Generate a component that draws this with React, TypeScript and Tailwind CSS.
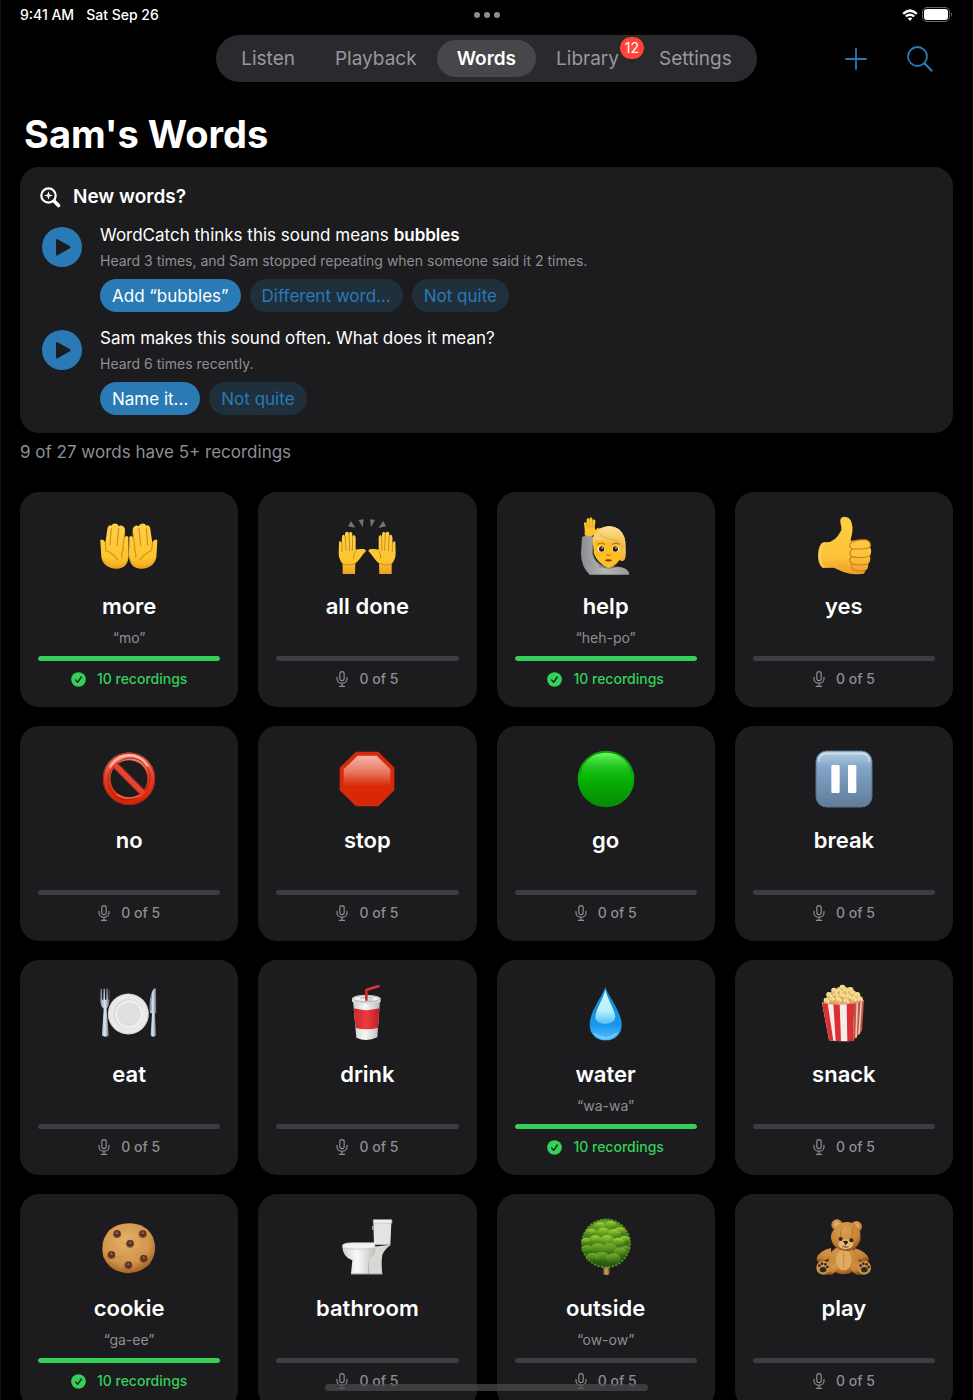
import type { ReactNode } from "react";
import clsx from "clsx";

type Word = {
  label: string;
  sound?: string;
  recordings: number;
  art: ReactNode;
};

type Suggestion = {
  title: ReactNode;
  detail: string;
  primary: string;
  secondary: string[];
};

const GOAL = 5;

const TABS: { label: string; badge?: number }[] = [
  { label: "Listen" },
  { label: "Playback" },
  { label: "Words" },
  { label: "Library", badge: 12 },
  { label: "Settings" },
];

const SUGGESTIONS: Suggestion[] = [
  {
    title: (
      <>
        WordCatch thinks this sound means <strong className="font-semibold">bubbles</strong>
      </>
    ),
    detail: "Heard 3 times, and Sam stopped repeating when someone said it 2 times.",
    primary: "Add “bubbles”",
    secondary: ["Different word...", "Not quite"],
  },
  {
    title: "Sam makes this sound often. What does it mean?",
    detail: "Heard 6 times recently.",
    primary: "Name it...",
    secondary: ["Not quite"],
  },
];

const WORDS: Word[] = [
  { label: "more", sound: "mo", recordings: 10, art: <PalmsUp /> },
  { label: "all done", recordings: 0, art: <RaisedHands /> },
  { label: "help", sound: "heh-po", recordings: 10, art: <HandRaiser /> },
  { label: "yes", recordings: 0, art: <ThumbsUp /> },
  { label: "no", recordings: 0, art: <Prohibited /> },
  { label: "stop", recordings: 0, art: <StopSign /> },
  { label: "go", recordings: 0, art: <GreenCircle /> },
  { label: "break", recordings: 0, art: <PauseButton /> },
  { label: "eat", recordings: 0, art: <Plate /> },
  { label: "drink", recordings: 0, art: <Cup /> },
  { label: "water", sound: "wa-wa", recordings: 10, art: <Droplet /> },
  { label: "snack", recordings: 0, art: <Popcorn /> },
  { label: "cookie", sound: "ga-ee", recordings: 10, art: <Cookie /> },
  { label: "bathroom", recordings: 0, art: <Toilet /> },
  { label: "outside", sound: "ow-ow", recordings: 0, art: <Tree /> },
  { label: "play", recordings: 0, art: <Teddy /> },
];

export default function App() {
  return (
    <div className="relative flex h-screen flex-col overflow-hidden border-x border-[#111111] bg-black font-['Inter','Liberation_Sans',sans-serif] text-white">
      <StatusBar />
      <TopNav />
      <main className="min-h-0 flex-1 overflow-hidden px-[19px] pt-7">
        <h1 className="px-1 text-[38px] font-bold leading-12">Sam's Words</h1>
        <SuggestionPanel />
        <p className="mt-[7px] text-[17px] leading-6 text-[#8e8e93]">9 of 27 words have 5+ recordings</p>
        <div className="mt-7 grid grid-cols-4 gap-x-5 gap-y-[19px]">
          {WORDS.map((word) => (
            <WordCard key={word.label} word={word} />
          ))}
        </div>
      </main>
      <div className="absolute inset-x-0 bottom-[9px] mx-auto h-[7px] w-1/3 rounded-full bg-[#4c4c4e]/70" />
    </div>
  );
}

function StatusBar() {
  return (
    <header className="grid h-[35px] grid-cols-3 px-[19px] pb-1.5 text-sm font-medium leading-none">
      <div className="flex items-center gap-3">
        <span>9:41 AM</span>
        <span>Sat Sep 26</span>
      </div>
      <div className="flex items-center justify-center gap-1">
        <span className="size-1.5 rounded-full bg-[#8e8e8e]" />
        <span className="size-1.5 rounded-full bg-[#8e8e8e]" />
        <span className="size-1.5 rounded-full bg-[#8e8e8e]" />
      </div>
      <div className="flex items-center justify-end gap-1">
        <svg viewBox="0 0 48 36" className="h-3 w-4" aria-label="Wi-Fi">
          <path d="M1 12Q24 -10 47 12L42 17Q24 1 6 17ZM9 20Q24 7 39 20L34 25Q24 17 14 25ZM17 28Q24 23 31 28L24 36Z" fill="#fff" />
        </svg>
        <svg viewBox="0 0 31 15" className="h-[15px] w-[31px]" aria-label="Battery full">
          <rect x="0.5" y="0.5" width="27" height="14" rx="4.5" fill="none" stroke="#6b6b6b" />
          <rect x="2" y="2" width="24" height="11" rx="3" fill="#fff" />
          <path d="M29 5 Q31 7.500 29 10Z" fill="#6b6b6b" />
        </svg>
      </div>
    </header>
  );
}

function TopNav() {
  return (
    <div className="grid grid-cols-[1fr_auto_1fr] items-center px-[39px]">
      <nav className="col-start-2 flex rounded-full bg-[#2a292d] p-[5px]">
        {TABS.map((tab) => (
          <button
            key={tab.label}
            type="button"
            className={clsx(
              "relative h-[37px] rounded-full px-5 text-[19px] leading-6",
              tab.label === "Words" ? "bg-[#47464b] font-semibold text-white" : "text-[#98989d]",
            )}
          >
            {tab.label}
            {tab.badge ? (
              <span className="absolute -top-[3px] right-[-5px] rounded-full bg-[#ff443a] px-[5px] text-sm leading-[22px] text-white">
                {tab.badge}
              </span>
            ) : null}
          </button>
        ))}
      </nav>
      <div className="flex items-center justify-end gap-10">
        <button type="button" aria-label="Add word">
          <svg viewBox="0 0 22 22" className="size-[22px]" fill="none" stroke="#2a7ab5" strokeWidth="1.8" strokeLinecap="round">
            <path d="M11 1V21M1 11H21" />
          </svg>
        </button>
        <button type="button" aria-label="Search">
          <svg viewBox="0 0 26 26" className="size-[26px]" fill="none" stroke="#2a7ab5" strokeLinecap="round">
            <circle cx="10.500" cy="10.500" r="9.500" strokeWidth="1.800" />
            <path d="M17.500 17.500L24.500 24.500" strokeWidth="2.400" />
          </svg>
        </button>
      </div>
    </div>
  );
}

function SuggestionPanel() {
  return (
    <section className="mt-[9px] rounded-[19px] bg-[#1c1c1e] px-5 py-[18px]">
      <div className="flex items-center gap-3">
        <svg viewBox="0 0 21 21" className="size-[21px]" fill="none" stroke="#fff" strokeLinecap="round">
          <circle cx="8.500" cy="8.500" r="7.200" strokeWidth="2.200" />
          <path d="M14.500 14.500L18.500 18.500" strokeWidth="3.600" />
          <path d="M8.500 4.200L9.600 7.400L12.800 8.500L9.600 9.600L8.500 12.800L7.400 9.600L4.200 8.500L7.400 7.400Z" fill="#fff" stroke="none" />
        </svg>
        <h2 className="text-[19px] font-semibold leading-6">New words?</h2>
      </div>
      <div className="mt-[13px] flex flex-col gap-[13px]">
        {SUGGESTIONS.map((item) => (
          <SuggestionRow key={item.detail} item={item} />
        ))}
      </div>
    </section>
  );
}

function SuggestionRow({ item }: { item: Suggestion }) {
  return (
    <div className="flex items-start gap-[18px] pl-0.5">
      <button type="button" aria-label="Play sound" className="mt-[5px] size-10 shrink-0 rounded-full bg-[#2a7ab5]">
        <svg viewBox="0 0 40 40" className="size-10">
          <path d="M14 13V27.500Q14 29 15.500 28.200L28 21.200Q29 20.300 28 19.300L15.500 12.200Q14 11.500 14 13Z" fill="#1c1c1e" />
        </svg>
      </button>
      <div>
        <p className="text-[17px] leading-[26px]">{item.title}</p>
        <p className="mt-[3px] text-sm leading-5 text-[#8e8e93]">{item.detail}</p>
        <div className="mt-2 flex gap-[9px]">
          <button type="button" className="h-[33px] rounded-full bg-[#2a7ab5] px-3 text-[17px] leading-6">
            {item.primary}
          </button>
          {item.secondary.map((label) => (
            <button key={label} type="button" className="h-[33px] rounded-full bg-[#1f2f3c] px-3 text-[17px] leading-6 text-[#2a7ab5]">
              {label}
            </button>
          ))}
        </div>
      </div>
    </div>
  );
}

function WordCard({ word }: { word: Word }) {
  const complete = word.recordings >= GOAL;
  const percent = Math.min(100, (word.recordings / GOAL) * 100);

  return (
    <button type="button" className="flex flex-col items-center rounded-[19px] bg-[#1c1c1e] px-[18px] pb-[19px] pt-[23px]">
      {word.art}
      <span className="mt-[15px] text-[22px] font-semibold leading-8">{word.label}</span>
      <span className="mt-[7px] h-[18px] text-sm leading-[18px] text-[#8e8e93]">
        {word.sound ? `“${word.sound}”` : null}
      </span>
      <span className="mt-[9px] h-[5px] w-full overflow-hidden rounded-full bg-[#3d3c41]">
        <span className="block h-full rounded-full bg-[#34d05a]" style={{ width: `${percent}%` }} />
      </span>
      {complete ? (
        <span className="mt-[9px] flex items-center gap-[11px] text-sm font-medium leading-[18px] text-[#34d05a]">
          <svg viewBox="0 0 45 45" className="size-[15px]">
            <circle cx="22.500" cy="22.500" r="22" fill="#34d05a" />
            <path d="M14 24L20 31L31 15" fill="none" stroke="#1c1c1e" strokeWidth="4" strokeLinecap="round" strokeLinejoin="round" />
          </svg>
          {word.recordings} recordings
        </span>
      ) : (
        <span className="mt-[9px] flex items-center gap-[11px] text-sm font-medium leading-[18px] text-[#8e8e93]">
          <svg viewBox="0 0 36 48" className="h-4 w-3" fill="none" stroke="#8e8e93" strokeWidth="3.500" strokeLinecap="round">
            <rect x="11.500" y="2" width="13" height="27" rx="6.500" />
            <path d="M3 19V23C3 41 33 41 33 23V19M18 37V45M10 46H26" />
          </svg>
          {word.recordings} of {GOAL}
        </span>
      )}
    </button>
  );
}

function Art({ children }: { children: ReactNode }) {
  return (
    <svg viewBox="0 0 180 180" className="size-[60px]" aria-hidden="true">
      {children}
    </svg>
  );
}

function PalmsUp() {
  const hand = (
    <>
      <path d="M4 78Q3 72 10 74Q16 74 19 84L25 42Q28 28 37 32Q42 24 50 26Q58 26 59 34Q66 29 74 35Q79 38 78 48L76 68Q82 59 88 66L89 120Q88 161 52 161Q14 160 7 126Z" fill="url(#palm)" />
      <path d="M37 40L33 90M59 40L54 92M77 55L71 100M19 84L21 108M25 108Q46 120 56 134M74 100Q66 116 69 128" fill="none" stroke="#d98a14" strokeWidth="3.200" strokeLinecap="round" />
      <path d="M12 132Q24 158 54 156Q80 154 86 130" fill="none" stroke="#e49a1c" strokeWidth="3" opacity="0.600" />
    </>
  );
  return (
    <Art>
      <defs>
        <linearGradient id="palm" x1="0" y1="0" x2="0" y2="1">
          <stop offset="0" stopColor="#fdd04a" />
          <stop offset="0.750" stopColor="#fdc52f" />
          <stop offset="1" stopColor="#eda51d" />
        </linearGradient>
      </defs>
      {hand}
      <g transform="matrix(-1 0 0 1 179 0)">{hand}</g>
    </Art>
  );
}

function RaisedHands() {
  const hand = (
    <>
      <path d="M6 84Q5 78 9 79Q13 79 14 87L15 66Q16 58 20 59Q23 59 24 66V56Q25 49 30 50Q35 50 36 57V55Q38 50 42 51Q46 52 46 59V68Q47 60 51 60Q56 61 56 69V104Q64 103 70 102H80Q87 103 87 108Q77 118 70 129Q60 142 55 145L54 177H17V147Q6 134 5 118Z" fill="url(#raised)" />
      <path d="M15 87V110M25 64L27 106M36 58L38 106M47 68L46 107M17 147Q35 155 54 146M55 109Q48 119 50 130" fill="none" stroke="#c98416" strokeWidth="2.800" strokeLinecap="round" />
    </>
  );
  return (
    <Art>
      <defs>
        <linearGradient id="raised" x1="0" y1="0" x2="0" y2="1">
          <stop offset="0" stopColor="#fdd04a" />
          <stop offset="0.700" stopColor="#fdc52f" />
          <stop offset="1" stopColor="#ec9e24" />
        </linearGradient>
      </defs>
      {hand}
      <g transform="matrix(-1 0 0 1 181 0)">{hand}</g>
      <path d="M42 18L33 34L55 38ZM65 15L80 13L77 37ZM99 13L114 15L102 37ZM139 18L147 34L124 39Z" fill="#747476" />
    </Art>
  );
}

function HandRaiser() {
  return (
    <Art>
      <defs>
        <linearGradient id="sleeve" x1="0" y1="0" x2="1" y2="0">
          <stop offset="0" stopColor="#8c8d90" />
          <stop offset="0.500" stopColor="#b4b5b7" />
          <stop offset="1" stopColor="#97989b" />
        </linearGradient>
        <linearGradient id="hair" x1="0" y1="0" x2="0" y2="1">
          <stop offset="0" stopColor="#ffe095" />
          <stop offset="1" stopColor="#f0b336" />
        </linearGradient>
      </defs>
      <path d="M18 66Q32 57 51 65L50 116Q57 148 88 156Q115 153 136 157Q158 161 160 179H41Q16 156 15 117Z" fill="url(#sleeve)" />
      <path d="M50 117Q57 145 88 156M69 154Q98 164 122 156" fill="none" stroke="#727377" strokeWidth="3" />
      <path d="M50 82Q48 53 73 40Q102 26 130 44Q151 62 149 98Q151 126 145 136Q136 141 130 134L56 118Z" fill="url(#hair)" />
      <path d="M53 76Q82 78 102 71Q124 75 138 92L135 125Q125 151 98 159Q66 148 53 115Z" fill="#fdbf22" />
      <path d="M70 44Q55 60 52 86Q58 76 62 64Q84 84 112 82Q128 84 138 104Q149 91 145 66Q130 29 94 34Z" fill="url(#hair)" />
      <path d="M70 55Q91 75 117 76Q134 79 142 98" fill="none" stroke="#d5942b" strokeWidth="2.500" opacity="0.700" />
      <g stroke="#fdc431" strokeWidth="8.500" strokeLinecap="round">
        <path d="M28 26L32 46M36 14L38 44M45 12V44M54 18L51 44M67 43L54 55" />
      </g>
      <path d="M26 36H55L60 48L50 62Q38 67 26 61Z" fill="#fdc431" />
      <path d="M32 25L35 40M41 18V38M50 20L48 38" stroke="#d4911f" strokeWidth="2" strokeLinecap="round" />
      <ellipse cx="76" cy="102" rx="11" ry="9" fill="#fff" />
      <ellipse cx="119" cy="102" rx="11" ry="9" fill="#fff" />
      <circle cx="77" cy="102" r="8" fill="#321b12" />
      <circle cx="118" cy="102" r="8" fill="#321b12" />
      <circle cx="79" cy="99" r="2.500" fill="#fff" />
      <circle cx="120" cy="99" r="2.500" fill="#fff" />
      <path d="M65 88Q76 81 86 88M109 88Q120 81 130 88M92 119Q98 124 104 119" fill="none" stroke="#b87918" strokeWidth="3.500" strokeLinecap="round" />
      <path d="M86 136Q97 129 109 136Q97 143 86 136Z" fill="#843013" />
    </Art>
  );
}

function ThumbsUp() {
  return (
    <Art>
      <defs>
        <linearGradient id="thumb" x1="0" y1="0" x2="0" y2="1">
          <stop offset="0" stopColor="#ffd144" />
          <stop offset="0.700" stopColor="#fdc33a" />
          <stop offset="1" stopColor="#ee9c25" />
        </linearGradient>
      </defs>
      <path d="M38 82Q64 82 82 46Q83 36 79 22Q77 6 91 5Q108 5 113 24Q119 45 111 69L110 78Q133 73 159 75Q173 83 168 97Q176 109 167 123Q173 137 162 147Q165 162 153 167Q154 177 140 177Q114 180 88 171Q72 163 59 158L26 159Q12 150 12 120Q14 85 30 81Z" fill="url(#thumb)" />
      <path d="M108 87Q119 73 158 75Q173 82 168 96Q163 103 116 102Q103 96 108 87ZM116 102Q102 111 112 125Q140 132 168 123M112 126Q102 137 115 147Q138 153 163 147M115 148Q109 159 121 165Q139 171 153 166" fill="none" stroke="#cb8120" strokeWidth="3.500" strokeLinecap="round" />
      <path d="M30 86Q16 97 18 125Q19 148 31 156" fill="none" stroke="#ffda62" strokeWidth="5" opacity="0.700" />
      <path d="M101 159Q81 155 68 139" fill="none" stroke="#f0aa2c" strokeWidth="4" opacity="0.600" />
    </Art>
  );
}

function Prohibited() {
  return (
    <Art>
      <defs>
        <linearGradient id="ring" x1="0" y1="0" x2="0" y2="1">
          <stop offset="0" stopColor="#f77f68" />
          <stop offset="0.450" stopColor="#e83d25" />
          <stop offset="1" stopColor="#db2500" />
        </linearGradient>
      </defs>
      <circle cx="90" cy="89" r="67" fill="none" stroke="url(#ring)" strokeWidth="23" />
      <path d="M46 46L134 134" stroke="#e8432e" strokeWidth="20" />
      <circle cx="90" cy="89" r="77" fill="none" stroke="#a52819" strokeWidth="3" />
      <path d="M55 43A58 58 0 0 1 137 125ZM43 55A58 58 0 0 0 125 137Z" fill="none" stroke="#8c251b" strokeWidth="2.500" />
      <path d="M34 53Q56 20 91 19Q124 19 145 50" fill="none" stroke="#ffd7cd" strokeWidth="6" strokeLinecap="round" opacity="0.750" />
      <path d="M54 137Q87 157 125 139" fill="none" stroke="#f9856f" strokeWidth="4" strokeLinecap="round" opacity="0.700" />
    </Art>
  );
}

function StopSign() {
  return (
    <Art>
      <defs>
        <linearGradient id="stop" x1="0" y1="0" x2="0" y2="1">
          <stop offset="0" stopColor="#f8b5a8" />
          <stop offset="0.350" stopColor="#e97761" />
          <stop offset="0.650" stopColor="#d92a06" />
          <stop offset="1" stopColor="#d92500" />
        </linearGradient>
      </defs>
      <path d="M57 8H124L172 56V124L124 172H57L8 124V56Z" fill="#d52a0b" />
      <path d="M62 20H119L160 61V119L119 160H62L20 119V61Z" fill="url(#stop)" />
    </Art>
  );
}

function GreenCircle() {
  return (
    <Art>
      <defs>
        <linearGradient id="go" x1="0" y1="0" x2="0" y2="1">
          <stop offset="0" stopColor="#0a970a" />
          <stop offset="0.450" stopColor="#05b303" />
          <stop offset="1" stopColor="#078b05" />
        </linearGradient>
        <linearGradient id="goShine" x1="0" y1="0" x2="0" y2="1">
          <stop offset="0" stopColor="#6bff61" />
          <stop offset="0.700" stopColor="#0ab606" stopOpacity="0" />
        </linearGradient>
      </defs>
      <circle cx="90" cy="90" r="85" fill="url(#go)" />
      <ellipse cx="90" cy="77" rx="74" ry="66" fill="url(#goShine)" />
    </Art>
  );
}

function PauseButton() {
  return (
    <Art>
      <defs>
        <linearGradient id="pause" x1="0" y1="0" x2="0" y2="1">
          <stop offset="0" stopColor="#b9d0e4" />
          <stop offset="0.300" stopColor="#81a4c8" />
          <stop offset="1" stopColor="#607c99" />
        </linearGradient>
      </defs>
      <rect x="6" y="6" width="168" height="168" rx="32" fill="url(#pause)" stroke="#56738c" strokeWidth="3" />
      <path d="M14 39Q14 14 39 14H141Q166 14 166 39" fill="none" stroke="#dcecf8" strokeWidth="5" opacity="0.600" />
      <rect x="52" y="48" width="25" height="84" rx="4" fill="#fff" />
      <rect x="102" y="48" width="25" height="84" rx="4" fill="#fff" />
    </Art>
  );
}

function Plate() {
  return (
    <Art>
      <defs>
        <linearGradient id="steel" x1="0" y1="0" x2="1" y2="0">
          <stop offset="0" stopColor="#899daf" />
          <stop offset="0.500" stopColor="#dbe7f0" />
          <stop offset="1" stopColor="#566470" />
        </linearGradient>
      </defs>
      <circle cx="88" cy="93" r="61" fill="#e9e9e8" />
      <circle cx="88" cy="93" r="60" fill="none" stroke="#c6c5c5" strokeWidth="2" />
      <circle cx="88" cy="93" r="44" fill="#cfd3da" />
      <circle cx="90" cy="94" r="42" fill="#f2f2f1" />
      <circle cx="90" cy="94" r="36" fill="#dfdfdf" />
      <path d="M5 19L8 17L9 50H13L14 17H17L18 50H22L23 17H26L27 50H29L30 17L32 24L31 58Q30 70 23 77L29 156Q28 161 18 161Q8 160 9 154L14 77Q5 70 4 57Z" fill="url(#steel)" />
      <path d="M171 16Q164 14 158 29Q149 53 153 91H159L155 155Q156 161 164 161Q172 160 171 154L168 91H172Z" fill="url(#steel)" />
      <path d="M159 32Q153 54 156 83" stroke="#65788a" strokeWidth="2" fill="none" />
    </Art>
  );
}

function Cup() {
  return (
    <Art>
      <defs>
        <linearGradient id="paper" x1="0" y1="0" x2="1" y2="0">
          <stop offset="0" stopColor="#cccccd" />
          <stop offset="0.450" stopColor="#f7f7f5" />
          <stop offset="1" stopColor="#b8b9b9" />
        </linearGradient>
        <linearGradient id="band" x1="0" y1="0" x2="1" y2="0">
          <stop offset="0" stopColor="#cb272e" />
          <stop offset="0.500" stopColor="#ef3b3c" />
          <stop offset="1" stopColor="#bf2027" />
        </linearGradient>
      </defs>
      <path d="M48 52L58 164Q88 178 121 163L129 52Z" fill="url(#paper)" />
      <path d="M50 76Q88 87 127 76L123 135Q88 143 56 135Z" fill="url(#band)" />
      <path d="M45 46Q49 36 89 35Q127 37 131 46V56Q89 69 45 56Z" fill="#d9d9d8" />
      <ellipse cx="88" cy="47" rx="40" ry="9" fill="#f1f1f0" stroke="#9e9fa0" strokeWidth="2" />
      <path d="M70 46Q88 39 108 46M88 51H106" stroke="#a9aaab" strokeWidth="3" fill="none" />
      <path d="M88 50V21L125 10" fill="none" stroke="#d4262f" strokeWidth="8" strokeLinecap="round" strokeLinejoin="round" />
      <path d="M89 19L125 8" stroke="#f45c57" strokeWidth="2" />
    </Art>
  );
}

function Droplet() {
  return (
    <Art>
      <defs>
        <linearGradient id="drop" x1="0" y1="0" x2="0" y2="1">
          <stop offset="0" stopColor="#1e86c9" />
          <stop offset="0.700" stopColor="#1596ed" />
          <stop offset="1" stopColor="#59bfff" />
        </linearGradient>
        <linearGradient id="dropShine" x1="0" y1="0" x2="0" y2="1">
          <stop offset="0" stopColor="#cdf3ff" />
          <stop offset="0.600" stopColor="#b7f2ff" />
          <stop offset="1" stopColor="#55bff5" />
        </linearGradient>
      </defs>
      <path d="M88 12C78 41 41 86 41 125C41 153 61 172 89 172C117 172 137 153 137 125C137 87 98 42 88 12Z" fill="url(#drop)" />
      <path d="M88 20C82 48 58 80 58 104Q61 122 88 123Q117 121 118 102C117 80 94 48 88 20Z" fill="url(#dropShine)" />
      <path d="M54 150Q88 179 123 150" fill="none" stroke="#9be3ff" strokeWidth="4" opacity="0.650" />
    </Art>
  );
}

function Popcorn() {
  const kernels = [
    [38, 53], [53, 46], [46, 36], [65, 34], [61, 23], [77, 22], [86, 14], [96, 22],
    [110, 21], [117, 31], [130, 36], [138, 49], [120, 47], [103, 40], [85, 36], [74, 49], [97, 54],
  ];
  return (
    <Art>
      <path d="M34 60L40 36L62 20L88 12L115 22L138 42L144 56L110 66Z" fill="#d8ad57" />
      {kernels.map(([x, y]) => (
        <g key={`${x}-${y}`}>
          <circle cx={x} cy={y} r="9" fill="#dfb862" />
          <circle cx={x - 2} cy={y - 2} r="7" fill="#f4d88b" />
          <circle cx={x + 4} cy={y + 3} r="4" fill="#fff0ba" />
          <circle cx={x + 1} cy={y + 3} r="1.500" fill="#ac7529" />
        </g>
      ))}
      <path d="M24 59Q65 65 121 60L119 173Q79 177 45 172Z" fill="#f7ece9" />
      <path d="M24 59L41 61L58 173L45 172ZM58 62L77 63L81 175L65 174ZM98 62L121 60L117 174L100 175Z" fill="#dc3037" />
      <path d="M121 60L150 53L144 143L117 174Z" fill="#bd5549" />
      <path d="M130 58L126 164M142 55L135 154" stroke="#edc4ae" strokeWidth="5" />
      <path d="M24 59Q65 68 121 60L150 53" fill="none" stroke="#ef8b7a" strokeWidth="3" />
    </Art>
  );
}

function Cookie() {
  const chips = [[54, 50], [131, 50], [93, 79], [37, 113], [134, 124], [88, 144]];
  return (
    <Art>
      <defs>
        <radialGradient id="cookie" cx="0.450" cy="0.350" r="0.650">
          <stop offset="0" stopColor="#e5b068" />
          <stop offset="0.700" stopColor="#d2944a" />
          <stop offset="1" stopColor="#a76325" />
        </radialGradient>
      </defs>
      <path d="M90 19Q143 20 162 61Q179 105 151 142Q120 172 78 168Q31 161 13 119Q2 72 31 40Q54 19 90 19Z" fill="url(#cookie)" />
      <path d="M64 73Q84 91 111 73M44 127Q60 112 77 121M109 119Q124 101 146 106" fill="none" stroke="#bd803d" strokeWidth="3" opacity="0.400" />
      {chips.map(([x, y]) => (
        <g key={`${x}-${y}`}>
          <ellipse cx={x} cy={y + 1} rx="12" ry="12" fill="#8d501f" />
          <path d={`M${x - 10} ${y + 3}L${x - 4} ${y - 10}L${x + 8} ${y - 8}L${x + 11} ${y + 4}L${x} ${y + 11}Z`} fill="#503027" />
          <path d={`M${x - 5} ${y + 1}L${x} ${y - 8}L${x + 6} ${y + 1}Z`} fill="#8b6152" />
        </g>
      ))}
    </Art>
  );
}

function Toilet() {
  return (
    <Art>
      <defs>
        <linearGradient id="porcelain" x1="0" y1="0" x2="1" y2="0">
          <stop offset="0" stopColor="#cfcfcd" />
          <stop offset="0.450" stopColor="#fafaf8" />
          <stop offset="1" stopColor="#bebfbd" />
        </linearGradient>
      </defs>
      <path d="M96 91L162 83Q144 95 136 113Q132 138 136 172H94Z" fill="#d8d8d5" />
      <path d="M16 89H115V103Q111 120 96 128L94 172H42L46 130Q17 119 16 89Z" fill="url(#porcelain)" />
      <path d="M17 83Q23 77 46 77H112L115 92Q60 101 17 92Z" fill="#f3f3f1" stroke="#bbbcb9" strokeWidth="2" />
      <path d="M109 17H163L160 83H111Z" fill="#e4e4e2" />
      <path d="M109 8H164L165 18H109Z" fill="#f4f4f2" stroke="#bbbcb8" strokeWidth="2" />
      <path d="M107 27V39" stroke="#a9aaa7" strokeWidth="4" />
      <path d="M43 170H136" stroke="#b7b7b4" strokeWidth="3" />
    </Art>
  );
}

function Tree() {
  const leaves = [
    [72, 26, 18], [104, 22, 18], [132, 40, 17], [45, 44, 17], [82, 44, 20], [114, 48, 19], [146, 65, 16],
    [30, 70, 15], [58, 66, 19], [93, 68, 22], [127, 73, 19], [150, 92, 13], [32, 94, 17], [65, 91, 21],
    [101, 92, 23], [133, 104, 21], [48, 119, 19], [77, 118, 22], [112, 123, 22],
  ];
  return (
    <Art>
      <defs>
        <radialGradient id="crown" cx="0.450" cy="0.200" r="0.850">
          <stop offset="0" stopColor="#77ad23" />
          <stop offset="0.600" stopColor="#3f7a18" />
          <stop offset="1" stopColor="#204910" />
        </radialGradient>
        <linearGradient id="leaf" x1="0" y1="0" x2="0" y2="1">
          <stop offset="0" stopColor="#a5d438" />
          <stop offset="0.500" stopColor="#65a322" stopOpacity="0.800" />
          <stop offset="1" stopColor="#2f6415" stopOpacity="0.300" />
        </linearGradient>
        <linearGradient id="trunk" x1="0" y1="0" x2="1" y2="0">
          <stop offset="0" stopColor="#856124" />
          <stop offset="0.500" stopColor="#c8a264" />
          <stop offset="1" stopColor="#785318" />
        </linearGradient>
      </defs>
      <path d="M82 140H100L101 171Q92 176 82 172Z" fill="url(#trunk)" />
      <circle cx="90" cy="79" r="72" fill="url(#crown)" stroke="#568e1f" strokeWidth="5" strokeDasharray="7 4" />
      {leaves.map(([x, y, r]) => (
        <g key={`${x}-${y}`} opacity={y > 85 ? 0.6 : 1}>
          <ellipse cx={x} cy={y + 3} rx={r} ry={r - 5} fill="url(#leaf)" />
          <path d={`M${x - 10} ${y}H${x + 9}M${x - 5} ${y - 6}H${x + 6}M${x - 8} ${y + 6}H${x + 8}`} stroke="#b4df49" strokeWidth="2" strokeDasharray="3 5" opacity="0.600" />
        </g>
      ))}
    </Art>
  );
}

function Teddy() {
  return (
    <Art>
      <defs>
        <radialGradient id="fur" cx="0.450" cy="0.300" r="0.700">
          <stop offset="0" stopColor="#dfa153" />
          <stop offset="0.750" stopColor="#c38132" />
          <stop offset="1" stopColor="#8f551c" />
        </radialGradient>
      </defs>
      <path d="M51 93Q17 101 8 123Q7 139 23 137L52 119ZM122 93Q158 104 165 125Q163 140 148 136L120 120Z" fill="url(#fur)" />
      <ellipse cx="89" cy="130" rx="46" ry="42" fill="url(#fur)" />
      <ellipse cx="89" cy="129" rx="24" ry="31" fill="#e0aa60" />
      <path d="M89 105V154" stroke="#b97c32" strokeWidth="2" />
      <circle cx="69" cy="24" r="17" fill="url(#fur)" />
      <circle cx="127" cy="29" r="17" fill="url(#fur)" />
      <circle cx="69" cy="24" r="9" fill="#e4ac70" />
      <circle cx="127" cy="29" r="9" fill="#e4ac70" />
      <path d="M62 34Q77 12 103 15Q133 17 139 49L139 69Q133 93 107 101Q80 105 61 87Q46 66 53 48Z" fill="url(#fur)" />
      <ellipse cx="95" cy="82" rx="22" ry="15" fill="#e9b875" />
      <path d="M86 29Q75 43 81 60M116 32Q117 49 112 62" fill="none" stroke="#ad6f2b" strokeWidth="2.500" />
      <circle cx="80" cy="66" r="6" fill="#332218" />
      <circle cx="112" cy="70" r="6" fill="#332218" />
      <path d="M87 73Q96 68 103 75Q98 83 94 83Z" fill="#291e19" />
      <path d="M94 82V88M84 87Q93 94 104 89" fill="none" stroke="#573a26" strokeWidth="2.500" />
      <path d="M31 136Q53 127 67 144Q72 163 53 173H28ZM147 136Q128 127 113 144Q108 163 127 173H150Z" fill="url(#fur)" />
      {[27, 151].map((x) => (
        <g key={x}>
          <ellipse cx={x} cy="152" rx="20" ry="21" fill="#cb9248" />
          <ellipse cx={x} cy="158" rx="10" ry="8" fill="#332a1e" />
          <circle cx={x - 11} cy="146" r="4" fill="#332a1e" />
          <circle cx={x - 3} cy="140" r="4" fill="#332a1e" />
          <circle cx={x + 7} cy="142" r="4" fill="#332a1e" />
          <circle cx={x + 13} cy="150" r="4" fill="#332a1e" />
        </g>
      ))}
    </Art>
  );
}
